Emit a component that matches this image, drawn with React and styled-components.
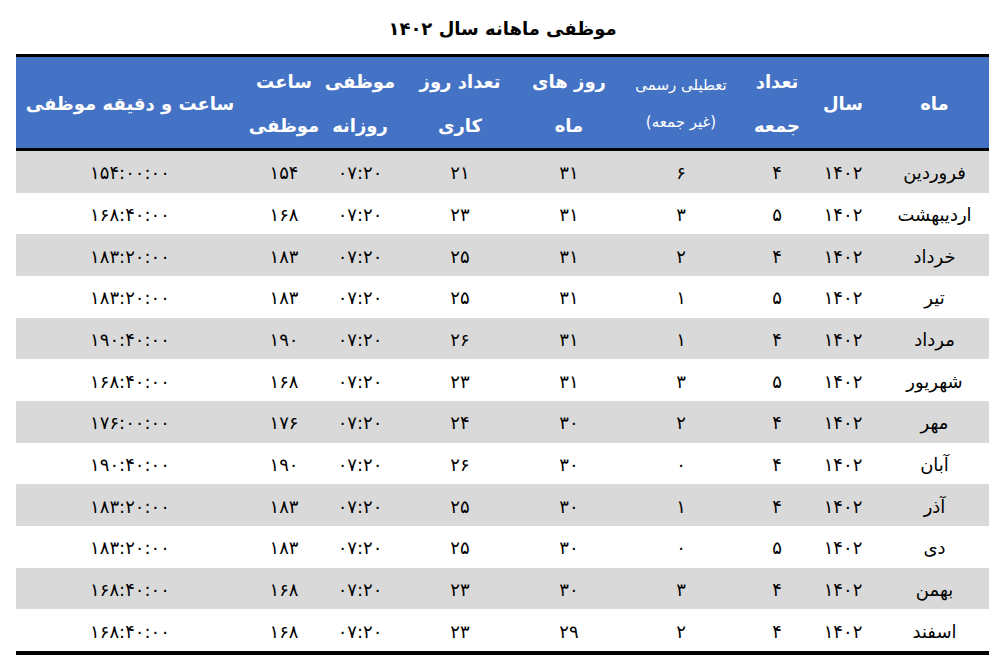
import React from "react";
import styled, { createGlobalStyle } from "styled-components";

const Global = createGlobalStyle`
  html, body { margin: 0; padding: 0; background: #ffffff; }
  body { font-family: "DejaVu Sans", "Noto Sans", sans-serif; color: #000; }
`;

const Page = styled.div`
  width: 1000px;
  height: 668px;
  padding: 0 11px 0 16px;
  box-sizing: border-box;
  direction: rtl;
`;

const Title = styled.h1`
  margin: 0;
  height: 54px;
  display: flex;
  align-items: center;
  justify-content: center;
  font-size: 18px;
  font-weight: bold;
  padding-top: 2px;
  box-sizing: border-box;
`;

const Table = styled.div`
  width: 973px;
  border-top: 3px solid #000;
  border-bottom: 4px solid #000;
`;

const cols = "109px 74px 58px 134px 90px 128px 72px 80px 1fr";

const HeadRow = styled.div`
  display: grid;
  grid-template-columns: ${cols};
  height: 91px;
  background: #4472c4;
  border-bottom: 3px solid #000;
`;

const HeadCell = styled.div`
  display: flex;
  flex-direction: column;
  align-items: center;
  justify-content: center;
  color: #fff;
  font-weight: ${(p) => (p.$small ? "normal" : "bold")};
  font-size: ${(p) => (p.$small ? "15px" : "18px")};
  line-height: ${(p) => (p.$small ? "37px" : "44px")};
  white-space: nowrap;
  padding-top: 2px;
`;

const Sub = styled.span`
  font-size: 15px;
`;

const Row = styled.div`
  display: grid;
  grid-template-columns: ${cols};
  height: 41.667px;
  background: ${(p) => (p.$shade ? "#d9d9d9" : "#ffffff")};
`;

const Cell = styled.div`
  display: flex;
  align-items: center;
  justify-content: center;
  font-size: 18px;
  white-space: nowrap;
  padding-top: 2px;
  letter-spacing: ${(p) => (p.$num ? "2px" : "normal")};
`;

const data = [
  ["فروردین", "۶", "۴", "۳۱", "۲۱", "۱۵۴", "۱۵۴:۰۰:۰۰"],
  ["اردیبهشت", "۳", "۵", "۳۱", "۲۳", "۱۶۸", "۱۶۸:۴۰:۰۰"],
  ["خرداد", "۲", "۴", "۳۱", "۲۵", "۱۸۳", "۱۸۳:۲۰:۰۰"],
  ["تیر", "۱", "۵", "۳۱", "۲۵", "۱۸۳", "۱۸۳:۲۰:۰۰"],
  ["مرداد", "۱", "۴", "۳۱", "۲۶", "۱۹۰", "۱۹۰:۴۰:۰۰"],
  ["شهریور", "۳", "۵", "۳۱", "۲۳", "۱۶۸", "۱۶۸:۴۰:۰۰"],
  ["مهر", "۲", "۴", "۳۰", "۲۴", "۱۷۶", "۱۷۶:۰۰:۰۰"],
  ["آبان", "۰", "۴", "۳۰", "۲۶", "۱۹۰", "۱۹۰:۴۰:۰۰"],
  ["آذر", "۱", "۴", "۳۰", "۲۵", "۱۸۳", "۱۸۳:۲۰:۰۰"],
  ["دی", "۰", "۵", "۳۰", "۲۵", "۱۸۳", "۱۸۳:۲۰:۰۰"],
  ["بهمن", "۳", "۴", "۳۰", "۲۳", "۱۶۸", "۱۶۸:۴۰:۰۰"],
  ["اسفند", "۲", "۴", "۲۹", "۲۳", "۱۶۸", "۱۶۸:۴۰:۰۰"],
];

export default function App() {
  return (
    <Page>
      <Global />
      <Title>موظفی ماهانه سال ۱۴۰۲</Title>
      <Table>
        <HeadRow>
          <HeadCell>ماه</HeadCell>
          <HeadCell>سال</HeadCell>
          <HeadCell>
            <span>تعداد</span>
            <span>جمعه</span>
          </HeadCell>
          <HeadCell $small>
            <span>تعطیلی رسمی</span>
            <Sub>(غیر جمعه)</Sub>
          </HeadCell>
          <HeadCell>
            <span>روز های</span>
            <span>ماه</span>
          </HeadCell>
          <HeadCell>
            <span>تعداد روز</span>
            <span>کاری</span>
          </HeadCell>
          <HeadCell>
            <span>موظفی</span>
            <span>روزانه</span>
          </HeadCell>
          <HeadCell>
            <span>ساعت</span>
            <span>موظفی</span>
          </HeadCell>
          <HeadCell>ساعت و دقیقه موظفی</HeadCell>
        </HeadRow>
        {data.map((r, i) => (
          <Row key={r[0]} $shade={i % 2 === 0}>
            <Cell>{r[0]}</Cell>
            <Cell $num>۱۴۰۲</Cell>
            <Cell $num>{r[2]}</Cell>
            <Cell $num>{r[1]}</Cell>
            <Cell $num>{r[3]}</Cell>
            <Cell $num>{r[4]}</Cell>
            <Cell $num>۰۷:۲۰</Cell>
            <Cell $num>{r[5]}</Cell>
            <Cell $num>{r[6]}</Cell>
          </Row>
        ))}
      </Table>
    </Page>
  );
}
